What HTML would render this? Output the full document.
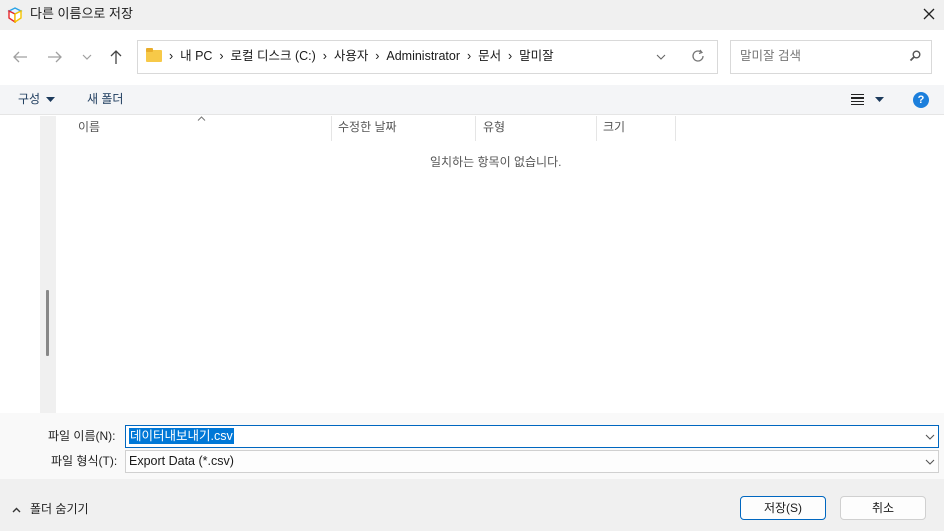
<!DOCTYPE html>
<html><head><meta charset="utf-8"><style>
*{box-sizing:border-box;margin:0;padding:0}
body{width:944px;height:531px;overflow:hidden;background:#fff;font-family:"Liberation Sans","Noto Sans CJK KR",sans-serif;font-size:12px;color:#1a1a1a;position:relative;line-height:15px}
.a{position:absolute}
</style></head><body>
<div class="a" style="left:0;top:0;width:944px;height:30px;background:#f0f0f0"></div>
<svg class="a" style="left:7px;top:7px" width="16" height="16" viewBox="0 0 16 16"><path d="M8 1L14 4L8 7L2 4Z" fill="#e8f4ff" stroke="#2aa3e6" stroke-width="1.4"/><path d="M2 4V11L8 15V7Z" fill="#fff" stroke="#e8282c" stroke-width="1.4"/><path d="M14 4V11L8 15V7Z" fill="#fff" stroke="#f5c400" stroke-width="1.4"/></svg>
<div class="a" style="left:30px;top:6px;font-size:13px">다른 이름으로 저장</div>
<svg class="a" style="left:923px;top:8px" width="12" height="12"><path d="M1 1L11 11M11 1L1 11" stroke="#222" stroke-width="1.3"/></svg>

<svg class="a" style="left:12px;top:50px" width="16" height="14"><path d="M15 7H2M7 2L2 7L7 12" fill="none" stroke="#a0a0a0" stroke-width="1.3"/></svg>
<svg class="a" style="left:47px;top:50px" width="16" height="14"><path d="M1 7H14M9 2L14 7L9 12" fill="none" stroke="#a0a0a0" stroke-width="1.3"/></svg>
<svg class="a" style="left:82px;top:54px" width="10" height="6"><path d="M1 1L5 5L9 1" fill="none" stroke="#a0a0a0" stroke-width="1.2"/></svg>
<svg class="a" style="left:109px;top:49px" width="14" height="16"><path d="M7 15V2M2 7L7 2L12 7" fill="none" stroke="#444" stroke-width="1.3"/></svg>
<div class="a" style="left:137px;top:40px;width:581px;height:34px;border:1px solid #d9d9d9"></div>
<div class="a" style="left:146px;top:50px;width:16px;height:12px;background:#f7c948;border-radius:1px"></div>
<div class="a" style="left:146px;top:48px;width:7px;height:4px;background:#e9ad2a;border-radius:1px"></div>
<div class="a" style="left:169px;top:49px;font-size:12.5px;white-space:pre;color:#1a1a1a">›  내 PC  ›  로컬 디스크 (C:)  ›  사용자  ›  Administrator  ›  문서  ›  말미잘</div>
<svg class="a" style="left:656px;top:54px" width="10" height="6"><path d="M1 1L5 5L9 1" fill="none" stroke="#666" stroke-width="1.1"/></svg>
<svg class="a" style="left:691px;top:49px" width="14" height="14"><path d="M12 7A5 5 0 1 1 10 3" fill="none" stroke="#777" stroke-width="1.3"/><path d="M9 1L11 3.5L8 4.5" fill="none" stroke="#777" stroke-width="1.2"/></svg>
<div class="a" style="left:730px;top:40px;width:202px;height:34px;border:1px solid #d9d9d9"></div>
<div class="a" style="left:740px;top:49px;color:#777;font-size:12.5px">말미잘 검색</div>
<svg class="a" style="left:909px;top:50px" width="12" height="12"><circle cx="7.5" cy="4.5" r="3.3" fill="none" stroke="#555" stroke-width="1.4"/><path d="M5 7L1.5 10.5" stroke="#555" stroke-width="1.8"/></svg>

<div class="a" style="left:0;top:85px;width:944px;height:30px;background:#f4f5f7;border-bottom:1px solid #e5e5e5"></div>
<div class="a" style="left:18px;top:92px;color:#1c3a5c">구성</div>
<svg class="a" style="left:46px;top:97px" width="9" height="5"><path d="M0 0H9L4.5 5Z" fill="#1c3a5c"/></svg>
<div class="a" style="left:87px;top:92px;color:#1c3a5c">새 폴더</div>
<div class="a" style="left:851px;top:94px;width:13px;height:11px;border-top:1.5px solid #222;border-bottom:1.5px solid #222"></div>
<div class="a" style="left:851px;top:97px;width:13px;height:1.5px;background:#222"></div>
<div class="a" style="left:851px;top:100.5px;width:13px;height:1.5px;background:#222"></div>
<svg class="a" style="left:875px;top:97px" width="9" height="5"><path d="M0 0H9L4.5 5Z" fill="#1c3a5c"/></svg>
<div class="a" style="left:913px;top:92px;width:16px;height:16px;border-radius:50%;background:#1c7fdc;color:#fff;font-weight:bold;font-size:11px;text-align:center;line-height:16px">?</div>

<div class="a" style="left:40px;top:116px;width:16px;height:297px;background:#f0f0f0"></div>
<div class="a" style="left:46px;top:290px;width:3px;height:66px;background:#888;border-radius:1px"></div>
<svg class="a" style="left:197px;top:116px" width="9" height="5"><path d="M1 4.5L4.5 1L8 4.5" fill="none" stroke="#777" stroke-width="1"/></svg>
<div class="a" style="left:78px;top:120px;color:#555">이름</div>
<div class="a" style="left:331px;top:116px;width:1px;height:25px;background:#e5e5e5"></div>
<div class="a" style="left:338px;top:120px;color:#555">수정한 날짜</div>
<div class="a" style="left:475px;top:116px;width:1px;height:25px;background:#e5e5e5"></div>
<div class="a" style="left:483px;top:120px;color:#555">유형</div>
<div class="a" style="left:596px;top:116px;width:1px;height:25px;background:#e5e5e5"></div>
<div class="a" style="left:603px;top:120px;color:#555">크기</div>
<div class="a" style="left:675px;top:116px;width:1px;height:25px;background:#e5e5e5"></div>
<div class="a" style="left:430px;top:155px;color:#555">일치하는 항목이 없습니다.</div>

<div class="a" style="left:0;top:413px;width:944px;height:66px;background:#f9f9f9"></div>
<div class="a" style="left:48px;top:429px;color:#222">파일 이름(N):</div>
<div class="a" style="left:125px;top:425px;width:814px;height:23px;background:#fff;border:1px solid #0067c0"></div>
<div class="a" style="left:129px;top:428px;height:16px;padding:0 1px;background:#0078d7;color:#fff;font-size:12.5px;line-height:16px">데이터내보내기.csv</div>
<svg class="a" style="left:925px;top:434px" width="10" height="6"><path d="M1 1L5 5L9 1" fill="none" stroke="#555" stroke-width="1.1"/></svg>
<div class="a" style="left:51px;top:454px;color:#222">파일 형식(T):</div>
<div class="a" style="left:125px;top:450px;width:814px;height:23px;background:#fdfdfd;border:1px solid #d0d0d0"></div>
<div class="a" style="left:129px;top:454px;font-size:12.5px">Export Data (*.csv)</div>
<svg class="a" style="left:925px;top:459px" width="10" height="6"><path d="M1 1L5 5L9 1" fill="none" stroke="#555" stroke-width="1.1"/></svg>

<div class="a" style="left:0;top:479px;width:944px;height:52px;background:#f0f0f0"></div>
<svg class="a" style="left:12px;top:507px" width="9" height="6"><path d="M1 5L4.5 1.5L8 5" fill="none" stroke="#333" stroke-width="1.4"/></svg>
<div class="a" style="left:30px;top:502px;color:#222">폴더 숨기기</div>
<div class="a" style="left:740px;top:496px;width:86px;height:24px;background:#fdfdfd;border:1px solid #0067c0;border-radius:4px;text-align:center;line-height:22px">저장(S)</div>
<div class="a" style="left:840px;top:496px;width:86px;height:24px;background:#fdfdfd;border:1px solid #d0d0d0;border-radius:4px;text-align:center;line-height:22px">취소</div>
</body></html>
